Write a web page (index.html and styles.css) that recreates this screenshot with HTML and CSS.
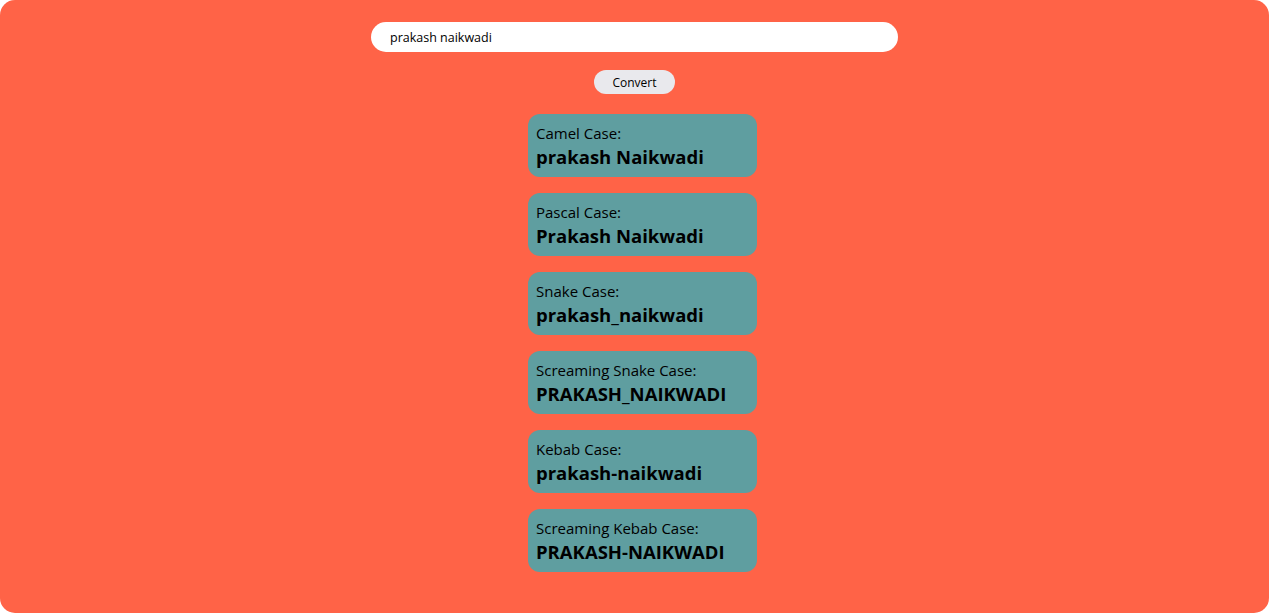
FILE: index.html
```html
<!DOCTYPE html>
<html>
<head>
<meta charset="utf-8">
<link rel="stylesheet" href="styles.css">
</head>
<body>
<div class="app">
  <input class="text-input" type="text" value="prakash naikwadi">
  <button class="convert-btn">Convert</button>
  <div class="results">
    <div class="card"><div class="label">Camel Case:</div><div class="value">prakash Naikwadi</div></div>
    <div class="card"><div class="label">Pascal Case:</div><div class="value">Prakash Naikwadi</div></div>
    <div class="card"><div class="label">Snake Case:</div><div class="value">prakash_naikwadi</div></div>
    <div class="card"><div class="label">Screaming Snake Case:</div><div class="value">PRAKASH_NAIKWADI</div></div>
    <div class="card"><div class="label">Kebab Case:</div><div class="value">prakash-naikwadi</div></div>
    <div class="card"><div class="label">Screaming Kebab Case:</div><div class="value">PRAKASH-NAIKWADI</div></div>
  </div>
</div>
</body>
</html>
```
FILE: styles.css
```css
html, body {
  margin: 0;
  padding: 0;
  background: #ffffff;
}
body {
  font-family: "Open Sans", "Noto Sans", sans-serif;
}
.app {
  box-sizing: border-box;
  height: 613px;
  background: #ff6347;
  border-radius: 15px;
  padding-top: 22px;
  display: flex;
  flex-direction: column;
  align-items: center;
}
.text-input {
  box-sizing: border-box;
  width: 527px;
  height: 30px;
  border: none;
  border-radius: 15px;
  padding: 0 19px;
  font-family: "Open Sans", sans-serif;
  font-size: 12.5px;
  color: #000;
  background: #fff;
  outline: none;
}
.convert-btn {
  box-sizing: border-box;
  margin-top: 18px;
  width: 81px;
  height: 24px;
  border: none;
  border-radius: 12px;
  background: #e9e9ed;
  font-family: "Open Sans", sans-serif;
  font-size: 12px;
  color: #000;
  padding: 0;
}
.results {
  margin-top: 20px;
  padding-left: 16px;
  display: flex;
  flex-direction: column;
  gap: 16px;
}
.card {
  box-sizing: border-box;
  width: 229px;
  height: 63px;
  background: #5f9ea0;
  border-radius: 12px;
  padding: 9px 8px 0 8px;
  color: #000;
}
.label {
  font-size: 15px;
  line-height: 21px;
}
.value {
  font-size: 18.5px;
  font-weight: bold;
  line-height: 25px;
}
```
